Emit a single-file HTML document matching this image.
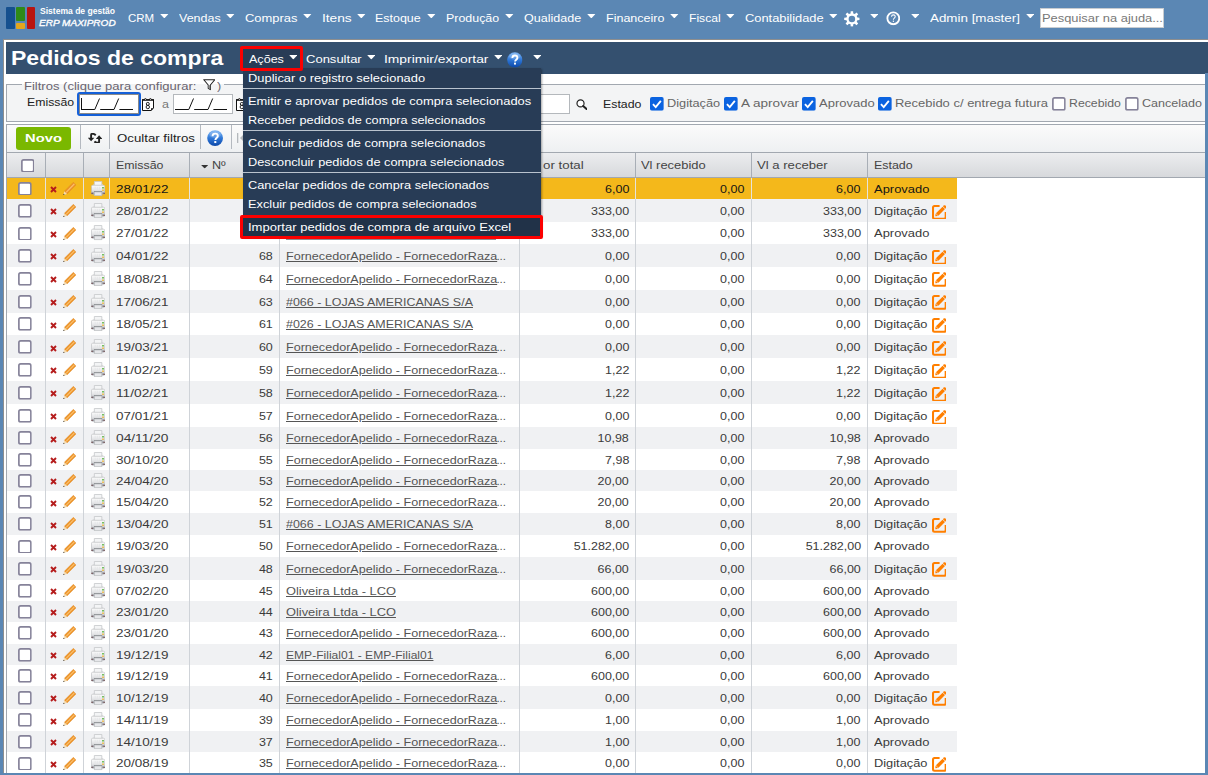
<!DOCTYPE html>
<html><head><meta charset="utf-8"><title>Pedidos de compra</title><style>
html,body{margin:0;padding:0}
body{width:1208px;height:775px;overflow:hidden;position:relative;background:#5b87b4;font-family:"Liberation Sans", sans-serif;}
.b{position:absolute;display:block;box-sizing:border-box}
.t{position:absolute;display:inline-block;white-space:nowrap;line-height:1;transform-origin:0 50%;font-family:"Liberation Sans", sans-serif;}
</style></head><body>

<svg width="0" height="0" style="position:absolute">
<defs>
<linearGradient id="gq" x1="0" y1="0" x2="0" y2="1"><stop offset="0" stop-color="#7db6f5"/><stop offset="0.5" stop-color="#2f78d8"/><stop offset="1" stop-color="#0c48a8"/></linearGradient>
<linearGradient id="gp" x1="0" y1="0" x2="0" y2="1"><stop offset="0" stop-color="#fcfcfc"/><stop offset=".55" stop-color="#e4e5e7"/><stop offset="1" stop-color="#b8babd"/></linearGradient>
<symbol id="arw" viewBox="0 0 9 5"><path d="M0 0H9L4.5 4.8Z" fill="#fff"/></symbol>
<symbol id="gear" viewBox="0 0 16 16"><path fill-rule="evenodd" fill="#fff" d="M6.67 2.46 L6.76 0.20 L9.24 0.20 L9.33 2.46 L10.98 3.14 L12.64 1.61 L14.39 3.36 L12.86 5.02 L13.54 6.67 L15.80 6.76 L15.80 9.24 L13.54 9.33 L12.86 10.98 L14.39 12.64 L12.64 14.39 L10.98 12.86 L9.33 13.54 L9.24 15.80 L6.76 15.80 L6.67 13.54 L5.02 12.86 L3.36 14.39 L1.61 12.64 L3.14 10.98 L2.46 9.33 L0.20 9.24 L0.20 6.76 L2.46 6.67 L3.14 5.02 L1.61 3.36 L3.36 1.61 L5.02 3.14Z M4.70 8.00 a3.3 3.3 0 1 0 6.6 0 a3.3 3.3 0 1 0 -6.6 0Z"/></symbol>
<symbol id="qc" viewBox="0 0 15 15"><circle cx="7.5" cy="7.5" r="6.1" fill="none" stroke="#fff" stroke-width="1.9"/><path d="M5.7 5.9c0-1.2.8-1.9 1.9-1.9s1.9.7 1.9 1.7c0 1.6-1.9 1.5-1.9 3.2" fill="none" stroke="#fff" stroke-width="1.1"/><rect x="7" y="9.9" width="1.2" height="1.3" fill="#fff"/></symbol>
<symbol id="qb" viewBox="0 0 16 16"><circle cx="8" cy="8" r="7.8" fill="url(#gq)"/><ellipse cx="8" cy="4.6" rx="5.6" ry="3.4" fill="#fff" opacity=".18"/><path d="M5.5 6.1c0-1.6 1.1-2.5 2.6-2.5s2.6.9 2.6 2.3c0 2-2.4 2-2.4 3.9" fill="none" stroke="#fff" stroke-width="1.9"/><rect x="7.2" y="10.9" width="2" height="2" fill="#fff"/></symbol>
<symbol id="fun" viewBox="0 0 13 12"><path d="M.8.8H12.2L7.6 6.2V11L5.4 9.6V6.2Z" fill="#fff" stroke="#222" stroke-width="1.1" stroke-linejoin="round"/><path d="M5.6 6.4H7.4V10.6L5.6 9.5Z" fill="#888"/></symbol>
<symbol id="cal" viewBox="0 0 12 13"><path d="M.5 1.800H11.500V10.200L9 12.500H.5Z" fill="#fff" stroke="#111" stroke-width="1"/><rect x="0" y="1.200" width="12" height="1.500" fill="#111"/><rect x="2.600" y=".2" width="1.600" height="1.400" fill="#111"/><rect x="7.600" y=".2" width="1.600" height="1.400" fill="#111"/><circle cx="3.400" cy="1.300" r=".55" fill="#fff"/><circle cx="8.400" cy="1.300" r=".55" fill="#fff"/><path d="M9 12.500V10.200H11.500Z" fill="#111"/><circle cx="5.800" cy="5.900" r="1.500" fill="none" stroke="#111" stroke-width=".9"/><circle cx="5.800" cy="9" r="1.700" fill="none" stroke="#111" stroke-width=".9"/></symbol>
<symbol id="mag" viewBox="0 0 12 11"><circle cx="4.600" cy="4.400" r="3.600" fill="#fff" stroke="#222" stroke-width="1.200"/><path d="M7.300 7L11 10.300" stroke="#222" stroke-width="2" stroke-linecap="round"/></symbol>
<symbol id="xx" viewBox="0 0 7 7"><path d="M1 1L6 6M6 1L1 6" stroke="#b51c1c" stroke-width="1.900" stroke-linecap="butt"/></symbol>
<symbol id="pen" viewBox="0 0 14 14"><path d="M10.900.3L13.700 3.100 4.200 12.600 1.400 9.800Z" fill="#ee9428" stroke="#d98424" stroke-width=".4"/><path d="M11.600 1.700L12.400 2.500 3.700 11.200 2.900 10.400Z" fill="#f9c274"/><path d="M1.400 9.800L4.200 12.600.4 13.700Z" fill="#f6dcae"/><path d="M.3 13.800L1.700 13.400.7 12.400Z" fill="#222"/></symbol>
<symbol id="prn" viewBox="0 0 14 15"><path d="M3.300.5H10.700V4.600H3.300Z" fill="#f4f5f6" stroke="#c6c8cb" stroke-width=".8"/><path d="M2.300 3.400L3.300 2.600V4.400H2.300ZM11.700 3.400L10.700 2.600V4.400H11.700Z" fill="#d4d6d8"/><rect x=".5" y="4.200" width="13" height="8.600" rx="1" fill="url(#gp)" stroke="#b9bbbe" stroke-width=".6"/><path d="M4.200 5.800V9.400M6.300 5.800V9.400M8.400 5.800V9.400" stroke="#e3e4e6" stroke-width=".7"/><rect x=".5" y="11.300" width="13" height="1.900" rx=".7" fill="#9698a2"/><rect x=".5" y="11.600" width="1.100" height="1.200" fill="#6e4242"/><rect x="12.400" y="11.600" width="1.100" height="1.200" fill="#6e4242"/><rect x="3" y="9.900" width="8" height=".9" fill="#777a7e"/><path d="M3.300 10.800H10.700V14.600H3.300Z" fill="#e6e7ea" stroke="#b6b8bb" stroke-width=".8"/><rect x="10.900" y="5.900" width="1.900" height="1.600" rx=".5" fill="#62b84a"/><rect x="10.900" y="8.300" width="1.900" height="1.400" rx=".5" fill="#f0b020"/></symbol>
<symbol id="edt" viewBox="0 0 15.2 15.3"><path d="M7.8 1.05H2.6Q1.05 1.05 1.05 2.600V12.650Q1.05 14.200 2.600 14.200H12.500Q14.050 14.200 14.050 12.650V7.100" fill="none" stroke="#ff7f00" stroke-width="2.1"/><path d="M3.40 11.60L3.72 8.81L6.19 11.28Z" fill="#ff7f00"/><path d="M4.07 8.45L10.86 1.67L13.33 4.14L6.55 10.93Z" fill="#ff7f00"/><path d="M11.21 1.31L12.20 0.32Q13.61 0.03 14.22 0.78Q14.97 1.39 14.68 2.80L13.69 3.79Z" fill="#ff7f00"/></symbol>
<symbol id="ref" viewBox="0 0 14.2 10.6"><path d="M7.700 2.300Q6.600.900 5 .900H4.100Q3.100.900 3.100 1.900V5.600" fill="none" stroke="#222" stroke-width="1.900"/><path d="M-.2 4.700H6.400L3.100 8.300Z" fill="#222"/><path d="M6.500 8.300Q7.600 9.700 9.200 9.700H10.100Q11.100 9.700 11.100 8.700V5" fill="none" stroke="#222" stroke-width="1.900"/><path d="M7.800 5.900H14.400L11.100 2.300Z" fill="#222"/></symbol>
<symbol id="pf" viewBox="0 0 8 10"><rect x="0" y="0" width="1.300" height="10" fill="#b4b8bc"/><path d="M8 0V10L3 5Z" fill="#b4b8bc"/></symbol>
<symbol id="srt" viewBox="0 0 8 4"><path d="M0 0H8L4 4Z" fill="#333"/></symbol>
<symbol id="chk" viewBox="0 0 14 14"><rect x="0" y="0" width="14" height="14" rx="2" fill="#0b63e0"/><path d="M3 7.300L5.800 10.200 11 4" fill="none" stroke="#fff" stroke-width="1.900"/></symbol>
<symbol id="unc" viewBox="0 0 14 14"><rect x=".9" y=".9" width="12.200" height="12.200" rx="1.800" fill="#fff" stroke="#858299" stroke-width="1.700"/></symbol>
</defs></svg>

<div class="b" style="left:6px;top:7px;width:8.5px;height:22px;background:#15508f;border-radius:1px"></div>
<div class="b" style="left:16.3px;top:7px;width:8.5px;height:13.7px;background:#2f8a17;border-radius:1px"></div>
<div class="b" style="left:16.3px;top:22.7px;width:8.5px;height:6px;background:#e3a61c;border-radius:1px"></div>
<div class="b" style="left:26.6px;top:7px;width:8.5px;height:22px;background:#b81410;border-radius:1px"></div>
<span class="t" style="left:40.00px;top:7px;font-size:9px;color:#fff;font-weight:bold;font-style:normal;transform:scaleX(0.9490);">Sistema de gestão</span>
<span class="t" style="left:39.30px;top:18px;font-size:9.5px;color:#fff;font-weight:normal;font-style:italic;transform:scaleX(1.0579);-webkit-text-stroke:0.35px #fff;">ERP MAXIPROD</span>
<span class="t" style="left:128.15px;top:13px;font-size:11.5px;color:#fff;font-weight:normal;font-style:normal;transform:scaleX(0.9999);">CRM</span>
<svg class="b" style="left:160.00px;top:13.70px;" width="8.6" height="4.6"><use href="#arw"/></svg>
<span class="t" style="left:178.90px;top:13px;font-size:11.5px;color:#fff;font-weight:normal;font-style:normal;transform:scaleX(1.0866);">Vendas</span>
<svg class="b" style="left:226.00px;top:13.70px;" width="8.6" height="4.6"><use href="#arw"/></svg>
<span class="t" style="left:245.15px;top:13px;font-size:11.5px;color:#fff;font-weight:normal;font-style:normal;transform:scaleX(1.1242);">Compras</span>
<svg class="b" style="left:303.00px;top:13.70px;" width="8.6" height="4.6"><use href="#arw"/></svg>
<span class="t" style="left:321.90px;top:13px;font-size:11.5px;color:#fff;font-weight:normal;font-style:normal;transform:scaleX(1.1910);">Itens</span>
<svg class="b" style="left:357.00px;top:13.70px;" width="8.6" height="4.6"><use href="#arw"/></svg>
<span class="t" style="left:375.40px;top:13px;font-size:11.5px;color:#fff;font-weight:normal;font-style:normal;transform:scaleX(1.0829);">Estoque</span>
<svg class="b" style="left:427.00px;top:13.70px;" width="8.6" height="4.6"><use href="#arw"/></svg>
<span class="t" style="left:446.15px;top:13px;font-size:11.5px;color:#fff;font-weight:normal;font-style:normal;transform:scaleX(1.0805);">Produção</span>
<svg class="b" style="left:505.00px;top:13.70px;" width="8.6" height="4.6"><use href="#arw"/></svg>
<span class="t" style="left:523.90px;top:13px;font-size:11.5px;color:#fff;font-weight:normal;font-style:normal;transform:scaleX(1.0908);">Qualidade</span>
<svg class="b" style="left:587.00px;top:13.70px;" width="8.6" height="4.6"><use href="#arw"/></svg>
<span class="t" style="left:605.90px;top:13px;font-size:11.5px;color:#fff;font-weight:normal;font-style:normal;transform:scaleX(1.0884);">Financeiro</span>
<svg class="b" style="left:670.00px;top:13.70px;" width="8.6" height="4.6"><use href="#arw"/></svg>
<span class="t" style="left:688.90px;top:13px;font-size:11.5px;color:#fff;font-weight:normal;font-style:normal;transform:scaleX(1.0556);">Fiscal</span>
<svg class="b" style="left:726.00px;top:13.70px;" width="8.6" height="4.6"><use href="#arw"/></svg>
<span class="t" style="left:744.90px;top:13px;font-size:11.5px;color:#fff;font-weight:normal;font-style:normal;transform:scaleX(1.1188);">Contabilidade</span>
<svg class="b" style="left:829.00px;top:13.70px;" width="8.6" height="4.6"><use href="#arw"/></svg>
<span class="t" style="left:929.90px;top:13px;font-size:11.5px;color:#fff;font-weight:normal;font-style:normal;transform:scaleX(1.1632);">Admin [master]</span>
<svg class="b" style="left:1025.50px;top:13.70px;" width="8.6" height="4.6"><use href="#arw"/></svg>
<svg class="b" style="left:844.00px;top:11.10px;" width="15.8" height="15.8"><use href="#gear"/></svg>
<svg class="b" style="left:869.75px;top:13.70px;" width="8.6" height="4.6"><use href="#arw"/></svg>
<svg class="b" style="left:885.70px;top:11.40px;" width="14.6" height="14.6"><use href="#qc"/></svg>
<svg class="b" style="left:910.70px;top:13.70px;" width="8.6" height="4.6"><use href="#arw"/></svg>
<div class="b" style="left:1040px;top:8px;width:124px;height:19.5px;background:#fff;border:1px solid #c8ccd0"></div>
<span class="t" style="left:1041.65px;top:13px;font-size:11.5px;color:#777;font-weight:normal;font-style:normal;transform:scaleX(1.1194);">Pesquisar na ajuda...</span>
<div class="b" style="left:3px;top:39px;width:1202px;height:734px;background:#fff"></div>
<div class="b" style="left:3px;top:39px;width:1205px;height:1px;background:#8e8e8e"></div>
<div class="b" style="left:3px;top:40px;width:1px;height:733px;background:#8e8e8e"></div>
<div class="b" style="left:4px;top:40px;width:1204px;height:2px;background:#fff"></div>
<div class="b" style="left:6px;top:42px;width:1202px;height:32px;background:#34506f"></div>
<span class="t" style="left:11.20px;top:47px;font-size:21px;color:#fff;font-weight:bold;font-style:normal;transform:scaleX(1.0959);">Pedidos de compra</span>
<div class="b" style="left:6px;top:84px;width:1210px;height:38px;background:#f3f4f5;border:1px solid #a2a8b0"></div>
<div class="b" style="left:21.5px;top:80px;width:202px;height:4px;background:#fff"></div>
<div class="b" style="left:21.5px;top:84px;width:202px;height:1px;background:#f3f4f5"></div>
<span class="t" style="left:23.80px;top:81px;font-size:11.5px;color:#6a6470;font-weight:normal;font-style:normal;transform:scaleX(1.1333);">Filtros (clique para configurar:</span>
<svg class="b" style="left:202.60px;top:79.00px;" width="12.6" height="11.6"><use href="#fun"/></svg>
<span class="t" style="left:217.10px;top:81px;font-size:11.5px;color:#6a6470;font-weight:normal;font-style:normal;transform:scaleX(1.1000);">)</span>
<span class="t" style="left:26.65px;top:97px;font-size:11.5px;color:#222;font-weight:normal;font-style:normal;transform:scaleX(1.0667);">Emissão</span>
<div class="b" style="left:77px;top:92px;width:63.5px;height:24px;background:#fff;border:2px solid #1560d8;border-radius:3px"></div>
<div class="b" style="left:79px;top:94px;width:59.5px;height:20px;border:1px solid #8a8a8a;background:#fff"></div>
<svg class="b" style="left:80.6px;top:98px" width="53" height="13"><path d="M0 11.5H13.8L18.5 .5M19.2 11.5H33L37.700 .5M38.400 11.5H52" fill="none" stroke="#111" stroke-width="1"/></svg>
<div class="b" style="left:80.5px;top:97.5px;width:1px;height:12.5px;background:#111"></div>
<svg class="b" style="left:142.10px;top:98.00px;" width="12" height="13"><use href="#cal"/></svg>
<span class="t" style="left:161.65px;top:99px;font-size:11.5px;color:#777;font-weight:normal;font-style:normal;transform:scaleX(1.0849);">a</span>
<div class="b" style="left:173px;top:94px;width:59.5px;height:19.5px;border:1px solid #b4b8bc;background:#fff"></div>
<svg class="b" style="left:175px;top:98px" width="53" height="13"><path d="M0 11.5H13.8L18.5 .5M19.2 11.5H33L37.700 .5M38.400 11.5H52" fill="none" stroke="#111" stroke-width="1"/></svg>
<svg class="b" style="left:235.80px;top:98.00px;" width="12" height="13"><use href="#cal"/></svg>
<div class="b" style="left:255px;top:94px;width:314.7px;height:19.5px;border:1px solid #b4b8bc;background:#fff"></div>
<svg class="b" style="left:575.60px;top:99.00px;" width="11.8" height="11"><use href="#mag"/></svg>
<span class="t" style="left:602.80px;top:99px;font-size:11.5px;color:#222;font-weight:normal;font-style:normal;transform:scaleX(1.0723);">Estado</span>
<svg class="b" style="left:650.00px;top:97.20px;" width="13.8" height="13.8"><use href="#chk"/></svg>
<span class="t" style="left:666.90px;top:98px;font-size:11.5px;color:#666;font-weight:normal;font-style:normal;transform:scaleX(1.1094);">Digitação</span>
<svg class="b" style="left:724.25px;top:97.20px;" width="13.8" height="13.8"><use href="#chk"/></svg>
<span class="t" style="left:740.65px;top:98px;font-size:11.5px;color:#666;font-weight:normal;font-style:normal;transform:scaleX(1.1770);">A aprovar</span>
<svg class="b" style="left:802.00px;top:97.20px;" width="13.8" height="13.8"><use href="#chk"/></svg>
<span class="t" style="left:818.65px;top:98px;font-size:11.5px;color:#666;font-weight:normal;font-style:normal;transform:scaleX(1.1313);">Aprovado</span>
<svg class="b" style="left:878.25px;top:97.20px;" width="13.8" height="13.8"><use href="#chk"/></svg>
<span class="t" style="left:894.90px;top:98px;font-size:11.5px;color:#666;font-weight:normal;font-style:normal;transform:scaleX(1.1285);">Recebido c/ entrega futura</span>
<svg class="b" style="left:1052.25px;top:97.20px;" width="13.8" height="13.8"><use href="#unc"/></svg>
<span class="t" style="left:1069.15px;top:98px;font-size:11.5px;color:#666;font-weight:normal;font-style:normal;transform:scaleX(1.0691);">Recebido</span>
<svg class="b" style="left:1125.25px;top:97.20px;" width="13.8" height="13.8"><use href="#unc"/></svg>
<span class="t" style="left:1142.15px;top:98px;font-size:11.5px;color:#666;font-weight:normal;font-style:normal;transform:scaleX(1.0903);">Cancelado</span>
<div class="b" style="left:6px;top:124px;width:1199px;height:28px;background:linear-gradient(#fbfbfb,#eef0f2);border-top:1px solid #a2a8b0;border-left:1px solid #a2a8b0"></div>
<div class="b" style="left:16px;top:127px;width:55px;height:23px;background:#7ab800;border-radius:3px"></div>
<span class="t" style="left:25.10px;top:133px;font-size:11.5px;color:#fff;font-weight:bold;font-style:normal;transform:scaleX(1.2835);">Novo</span>
<div class="b" style="left:80px;top:125px;width:1px;height:24px;background:#b4b9c0"></div>
<div class="b" style="left:109px;top:125px;width:1px;height:24px;background:#b4b9c0"></div>
<div class="b" style="left:200px;top:125px;width:1px;height:24px;background:#b4b9c0"></div>
<div class="b" style="left:230.5px;top:125px;width:1px;height:24px;background:#b4b9c0"></div>
<svg class="b" style="left:87.90px;top:132.80px;" width="14.2" height="10.6"><use href="#ref"/></svg>
<span class="t" style="left:116.80px;top:133px;font-size:11.5px;color:#222;font-weight:normal;font-style:normal;transform:scaleX(1.1513);">Ocultar filtros</span>
<svg class="b" style="left:206.90px;top:130.10px;" width="16.2" height="16.2"><use href="#qb"/></svg>
<svg class="b" style="left:237.00px;top:133.00px;" width="8" height="10"><use href="#pf"/></svg>
<div class="b" style="left:6px;top:152px;width:1199px;height:26px;background:linear-gradient(#ecedef,#d7d9dc);border-top:1px solid #a2a8b0;border-bottom:1px solid #a2a8b0;border-left:1px solid #a2a8b0;box-sizing:border-box"></div>
<div class="b" style="left:45px;top:153px;width:1px;height:24px;background:#a8aeb6"></div>
<div class="b" style="left:83px;top:153px;width:1px;height:24px;background:#a8aeb6"></div>
<div class="b" style="left:109px;top:153px;width:1px;height:24px;background:#a8aeb6"></div>
<div class="b" style="left:189px;top:153px;width:1px;height:24px;background:#a8aeb6"></div>
<div class="b" style="left:279px;top:153px;width:1px;height:24px;background:#a8aeb6"></div>
<div class="b" style="left:519px;top:153px;width:1px;height:24px;background:#a8aeb6"></div>
<div class="b" style="left:635px;top:153px;width:1px;height:24px;background:#a8aeb6"></div>
<div class="b" style="left:751px;top:153px;width:1px;height:24px;background:#a8aeb6"></div>
<div class="b" style="left:867px;top:153px;width:1px;height:24px;background:#a8aeb6"></div>
<svg class="b" style="left:20.70px;top:158.60px;" width="13.6" height="13.6"><use href="#unc"/></svg>
<span class="t" style="left:115.65px;top:160px;font-size:11.5px;color:#444;font-weight:normal;font-style:normal;transform:scaleX(1.0757);">Emissão</span>
<svg class="b" style="left:200.75px;top:165.20px;" width="7.4" height="3.6"><use href="#srt"/></svg>
<span class="t" style="left:211.90px;top:160px;font-size:11.5px;color:#444;font-weight:normal;font-style:normal;transform:scaleX(1.0946);">Nº</span>
<span class="t" style="left:285.65px;top:160px;font-size:11.5px;color:#444;font-weight:normal;font-style:normal;transform:scaleX(1.0193);">Fornecedor</span>
<span class="t" style="left:543.15px;top:160px;font-size:11.5px;color:#444;font-weight:normal;font-style:normal;transform:scaleX(1.1572);">or total</span>
<span class="t" style="left:525.40px;top:160px;font-size:11.5px;color:#444;font-weight:normal;font-style:normal;transform:scaleX(0.9949);">Val</span>
<span class="t" style="left:641.40px;top:160px;font-size:11.5px;color:#444;font-weight:normal;font-style:normal;transform:scaleX(1.1243);">Vl recebido</span>
<span class="t" style="left:757.40px;top:160px;font-size:11.5px;color:#444;font-weight:normal;font-style:normal;transform:scaleX(1.1400);">Vl a receber</span>
<span class="t" style="left:873.90px;top:160px;font-size:11.5px;color:#444;font-weight:normal;font-style:normal;transform:scaleX(1.0806);">Estado</span>
<div class="b" style="left:7px;top:178px;width:950px;height:21px;background:#f4b81b"></div>
<svg class="b" style="left:18.00px;top:181.70px;" width="13.8" height="13.8"><use href="#unc"/></svg>
<svg class="b" style="left:49.70px;top:186.15px;" width="7" height="7"><use href="#xx"/></svg>
<svg class="b" style="left:62.90px;top:181.75px;" width="13.3" height="13.3"><use href="#pen"/></svg>
<svg class="b" style="left:90.80px;top:180.55px;" width="14.2" height="15.2"><use href="#prn"/></svg>
<span class="t" style="left:115.65px;top:184px;font-size:11.5px;color:#151515;font-weight:normal;font-style:normal;transform:scaleX(1.1717);">28/01/22</span>
<span class="t" style="right:934.90px;top:184px;font-size:11.5px;color:#151515;font-weight:normal;font-style:normal;transform-origin:100% 50%;transform:scaleX(1.0850);">70</span>
<span class="t" style="left:285.65px;top:184px;font-size:11.5px;color:#222;font-weight:normal;font-style:normal;transform:scaleX(1.0940);text-decoration:underline;">FornecedorApelido - FornecedorRaza</span>
<span class="t" style="left:496.40px;top:184px;font-size:11.5px;color:#222;font-weight:normal;font-style:normal;transform:scaleX(1.0000);">...</span>
<span class="t" style="right:578.90px;top:184px;font-size:11.5px;color:#151515;font-weight:normal;font-style:normal;transform-origin:100% 50%;transform:scaleX(1.0850);">6,00</span>
<span class="t" style="right:463.60px;top:184px;font-size:11.5px;color:#151515;font-weight:normal;font-style:normal;transform-origin:100% 50%;transform:scaleX(1.0850);">0,00</span>
<span class="t" style="right:347.20px;top:184px;font-size:11.5px;color:#151515;font-weight:normal;font-style:normal;transform-origin:100% 50%;transform:scaleX(1.0850);">6,00</span>
<span class="t" style="left:873.60px;top:184px;font-size:11.5px;color:#151515;font-weight:normal;font-style:normal;transform:scaleX(1.1252);">Aprovado</span>
<div class="b" style="left:7px;top:199px;width:950px;height:23px;background:#f0f1f3"></div>
<svg class="b" style="left:18.00px;top:203.95px;" width="13.8" height="13.8"><use href="#unc"/></svg>
<svg class="b" style="left:49.70px;top:208.40px;" width="7" height="7"><use href="#xx"/></svg>
<svg class="b" style="left:62.90px;top:204.00px;" width="13.3" height="13.3"><use href="#pen"/></svg>
<svg class="b" style="left:90.80px;top:202.80px;" width="14.2" height="15.2"><use href="#prn"/></svg>
<span class="t" style="left:115.65px;top:206px;font-size:11.5px;color:#3a3a3a;font-weight:normal;font-style:normal;transform:scaleX(1.1717);">28/01/22</span>
<span class="t" style="right:934.90px;top:206px;font-size:11.5px;color:#3a3a3a;font-weight:normal;font-style:normal;transform-origin:100% 50%;transform:scaleX(1.0850);">69</span>
<span class="t" style="left:285.65px;top:206px;font-size:11.5px;color:#555;font-weight:normal;font-style:normal;transform:scaleX(1.0940);text-decoration:underline;">FornecedorApelido - FornecedorRaza</span>
<span class="t" style="left:496.40px;top:206px;font-size:11.5px;color:#555;font-weight:normal;font-style:normal;transform:scaleX(1.0000);">...</span>
<span class="t" style="right:578.90px;top:206px;font-size:11.5px;color:#3a3a3a;font-weight:normal;font-style:normal;transform-origin:100% 50%;transform:scaleX(1.0850);">333,00</span>
<span class="t" style="right:463.60px;top:206px;font-size:11.5px;color:#3a3a3a;font-weight:normal;font-style:normal;transform-origin:100% 50%;transform:scaleX(1.0850);">0,00</span>
<span class="t" style="right:347.20px;top:206px;font-size:11.5px;color:#3a3a3a;font-weight:normal;font-style:normal;transform-origin:100% 50%;transform:scaleX(1.0850);">333,00</span>
<span class="t" style="left:873.60px;top:206px;font-size:11.5px;color:#3a3a3a;font-weight:normal;font-style:normal;transform:scaleX(1.1157);">Digitação</span>
<svg class="b" style="left:931.60px;top:204.55px;" width="14.8" height="14.9"><use href="#edt"/></svg>
<div class="b" style="left:7px;top:222px;width:950px;height:22px;background:#fff"></div>
<svg class="b" style="left:18.00px;top:226.55px;" width="13.8" height="13.8"><use href="#unc"/></svg>
<svg class="b" style="left:49.70px;top:231.00px;" width="7" height="7"><use href="#xx"/></svg>
<svg class="b" style="left:62.90px;top:226.60px;" width="13.3" height="13.3"><use href="#pen"/></svg>
<svg class="b" style="left:90.80px;top:225.40px;" width="14.2" height="15.2"><use href="#prn"/></svg>
<span class="t" style="left:115.65px;top:228px;font-size:11.5px;color:#3a3a3a;font-weight:normal;font-style:normal;transform:scaleX(1.1717);">27/01/22</span>
<span class="t" style="right:934.90px;top:228px;font-size:11.5px;color:#3a3a3a;font-weight:normal;font-style:normal;transform-origin:100% 50%;transform:scaleX(1.0850);">69</span>
<span class="t" style="left:285.65px;top:228px;font-size:11.5px;color:#555;font-weight:normal;font-style:normal;transform:scaleX(1.0940);text-decoration:underline;">FornecedorApelido - FornecedorRaza</span>
<span class="t" style="left:496.40px;top:228px;font-size:11.5px;color:#555;font-weight:normal;font-style:normal;transform:scaleX(1.0000);">...</span>
<span class="t" style="right:578.90px;top:228px;font-size:11.5px;color:#3a3a3a;font-weight:normal;font-style:normal;transform-origin:100% 50%;transform:scaleX(1.0850);">333,00</span>
<span class="t" style="right:463.60px;top:228px;font-size:11.5px;color:#3a3a3a;font-weight:normal;font-style:normal;transform-origin:100% 50%;transform:scaleX(1.0850);">0,00</span>
<span class="t" style="right:347.20px;top:228px;font-size:11.5px;color:#3a3a3a;font-weight:normal;font-style:normal;transform-origin:100% 50%;transform:scaleX(1.0850);">333,00</span>
<span class="t" style="left:873.60px;top:228px;font-size:11.5px;color:#3a3a3a;font-weight:normal;font-style:normal;transform:scaleX(1.1252);">Aprovado</span>
<div class="b" style="left:7px;top:244px;width:950px;height:23px;background:#f0f1f3"></div>
<svg class="b" style="left:18.00px;top:248.95px;" width="13.8" height="13.8"><use href="#unc"/></svg>
<svg class="b" style="left:49.70px;top:253.40px;" width="7" height="7"><use href="#xx"/></svg>
<svg class="b" style="left:62.90px;top:249.00px;" width="13.3" height="13.3"><use href="#pen"/></svg>
<svg class="b" style="left:90.80px;top:247.80px;" width="14.2" height="15.2"><use href="#prn"/></svg>
<span class="t" style="left:115.65px;top:251px;font-size:11.5px;color:#3a3a3a;font-weight:normal;font-style:normal;transform:scaleX(1.1717);">04/01/22</span>
<span class="t" style="right:934.90px;top:251px;font-size:11.5px;color:#3a3a3a;font-weight:normal;font-style:normal;transform-origin:100% 50%;transform:scaleX(1.0850);">68</span>
<span class="t" style="left:285.65px;top:251px;font-size:11.5px;color:#555;font-weight:normal;font-style:normal;transform:scaleX(1.0940);text-decoration:underline;">FornecedorApelido - FornecedorRaza</span>
<span class="t" style="left:496.40px;top:251px;font-size:11.5px;color:#555;font-weight:normal;font-style:normal;transform:scaleX(1.0000);">...</span>
<span class="t" style="right:578.90px;top:251px;font-size:11.5px;color:#3a3a3a;font-weight:normal;font-style:normal;transform-origin:100% 50%;transform:scaleX(1.0850);">0,00</span>
<span class="t" style="right:463.60px;top:251px;font-size:11.5px;color:#3a3a3a;font-weight:normal;font-style:normal;transform-origin:100% 50%;transform:scaleX(1.0850);">0,00</span>
<span class="t" style="right:347.20px;top:251px;font-size:11.5px;color:#3a3a3a;font-weight:normal;font-style:normal;transform-origin:100% 50%;transform:scaleX(1.0850);">0,00</span>
<span class="t" style="left:873.60px;top:251px;font-size:11.5px;color:#3a3a3a;font-weight:normal;font-style:normal;transform:scaleX(1.1157);">Digitação</span>
<svg class="b" style="left:931.60px;top:249.55px;" width="14.8" height="14.9"><use href="#edt"/></svg>
<div class="b" style="left:7px;top:267px;width:950px;height:23px;background:#fff"></div>
<svg class="b" style="left:18.00px;top:271.80px;" width="13.8" height="13.8"><use href="#unc"/></svg>
<svg class="b" style="left:49.70px;top:276.25px;" width="7" height="7"><use href="#xx"/></svg>
<svg class="b" style="left:62.90px;top:271.85px;" width="13.3" height="13.3"><use href="#pen"/></svg>
<svg class="b" style="left:90.80px;top:270.65px;" width="14.2" height="15.2"><use href="#prn"/></svg>
<span class="t" style="left:115.65px;top:274px;font-size:11.5px;color:#3a3a3a;font-weight:normal;font-style:normal;transform:scaleX(1.1717);">18/08/21</span>
<span class="t" style="right:934.90px;top:274px;font-size:11.5px;color:#3a3a3a;font-weight:normal;font-style:normal;transform-origin:100% 50%;transform:scaleX(1.0850);">64</span>
<span class="t" style="left:285.65px;top:274px;font-size:11.5px;color:#555;font-weight:normal;font-style:normal;transform:scaleX(1.0940);text-decoration:underline;">FornecedorApelido - FornecedorRaza</span>
<span class="t" style="left:496.40px;top:274px;font-size:11.5px;color:#555;font-weight:normal;font-style:normal;transform:scaleX(1.0000);">...</span>
<span class="t" style="right:578.90px;top:274px;font-size:11.5px;color:#3a3a3a;font-weight:normal;font-style:normal;transform-origin:100% 50%;transform:scaleX(1.0850);">0,00</span>
<span class="t" style="right:463.60px;top:274px;font-size:11.5px;color:#3a3a3a;font-weight:normal;font-style:normal;transform-origin:100% 50%;transform:scaleX(1.0850);">0,00</span>
<span class="t" style="right:347.20px;top:274px;font-size:11.5px;color:#3a3a3a;font-weight:normal;font-style:normal;transform-origin:100% 50%;transform:scaleX(1.0850);">0,00</span>
<span class="t" style="left:873.60px;top:274px;font-size:11.5px;color:#3a3a3a;font-weight:normal;font-style:normal;transform:scaleX(1.1157);">Digitação</span>
<svg class="b" style="left:931.60px;top:272.40px;" width="14.8" height="14.9"><use href="#edt"/></svg>
<div class="b" style="left:7px;top:290px;width:950px;height:23px;background:#f0f1f3"></div>
<svg class="b" style="left:18.00px;top:294.85px;" width="13.8" height="13.8"><use href="#unc"/></svg>
<svg class="b" style="left:49.70px;top:299.30px;" width="7" height="7"><use href="#xx"/></svg>
<svg class="b" style="left:62.90px;top:294.90px;" width="13.3" height="13.3"><use href="#pen"/></svg>
<svg class="b" style="left:90.80px;top:293.70px;" width="14.2" height="15.2"><use href="#prn"/></svg>
<span class="t" style="left:115.65px;top:297px;font-size:11.5px;color:#3a3a3a;font-weight:normal;font-style:normal;transform:scaleX(1.1717);">17/06/21</span>
<span class="t" style="right:934.90px;top:297px;font-size:11.5px;color:#3a3a3a;font-weight:normal;font-style:normal;transform-origin:100% 50%;transform:scaleX(1.0850);">63</span>
<span class="t" style="left:285.65px;top:297px;font-size:11.5px;color:#555;font-weight:normal;font-style:normal;transform:scaleX(1.0833);text-decoration:underline;">#066 - LOJAS AMERICANAS S/A</span>
<span class="t" style="right:578.90px;top:297px;font-size:11.5px;color:#3a3a3a;font-weight:normal;font-style:normal;transform-origin:100% 50%;transform:scaleX(1.0850);">0,00</span>
<span class="t" style="right:463.60px;top:297px;font-size:11.5px;color:#3a3a3a;font-weight:normal;font-style:normal;transform-origin:100% 50%;transform:scaleX(1.0850);">0,00</span>
<span class="t" style="right:347.20px;top:297px;font-size:11.5px;color:#3a3a3a;font-weight:normal;font-style:normal;transform-origin:100% 50%;transform:scaleX(1.0850);">0,00</span>
<span class="t" style="left:873.60px;top:297px;font-size:11.5px;color:#3a3a3a;font-weight:normal;font-style:normal;transform:scaleX(1.1157);">Digitação</span>
<svg class="b" style="left:931.60px;top:295.45px;" width="14.8" height="14.9"><use href="#edt"/></svg>
<div class="b" style="left:7px;top:313px;width:950px;height:22px;background:#fff"></div>
<svg class="b" style="left:18.00px;top:317.45px;" width="13.8" height="13.8"><use href="#unc"/></svg>
<svg class="b" style="left:49.70px;top:321.90px;" width="7" height="7"><use href="#xx"/></svg>
<svg class="b" style="left:62.90px;top:317.50px;" width="13.3" height="13.3"><use href="#pen"/></svg>
<svg class="b" style="left:90.80px;top:316.30px;" width="14.2" height="15.2"><use href="#prn"/></svg>
<span class="t" style="left:115.65px;top:319px;font-size:11.5px;color:#3a3a3a;font-weight:normal;font-style:normal;transform:scaleX(1.1717);">18/05/21</span>
<span class="t" style="right:934.90px;top:319px;font-size:11.5px;color:#3a3a3a;font-weight:normal;font-style:normal;transform-origin:100% 50%;transform:scaleX(1.0850);">61</span>
<span class="t" style="left:285.65px;top:319px;font-size:11.5px;color:#555;font-weight:normal;font-style:normal;transform:scaleX(1.0833);text-decoration:underline;">#026 - LOJAS AMERICANAS S/A</span>
<span class="t" style="right:578.90px;top:319px;font-size:11.5px;color:#3a3a3a;font-weight:normal;font-style:normal;transform-origin:100% 50%;transform:scaleX(1.0850);">0,00</span>
<span class="t" style="right:463.60px;top:319px;font-size:11.5px;color:#3a3a3a;font-weight:normal;font-style:normal;transform-origin:100% 50%;transform:scaleX(1.0850);">0,00</span>
<span class="t" style="right:347.20px;top:319px;font-size:11.5px;color:#3a3a3a;font-weight:normal;font-style:normal;transform-origin:100% 50%;transform:scaleX(1.0850);">0,00</span>
<span class="t" style="left:873.60px;top:319px;font-size:11.5px;color:#3a3a3a;font-weight:normal;font-style:normal;transform:scaleX(1.1157);">Digitação</span>
<svg class="b" style="left:931.60px;top:318.05px;" width="14.8" height="14.9"><use href="#edt"/></svg>
<div class="b" style="left:7px;top:335px;width:950px;height:23px;background:#f0f1f3"></div>
<svg class="b" style="left:18.00px;top:340.05px;" width="13.8" height="13.8"><use href="#unc"/></svg>
<svg class="b" style="left:49.70px;top:344.50px;" width="7" height="7"><use href="#xx"/></svg>
<svg class="b" style="left:62.90px;top:340.10px;" width="13.3" height="13.3"><use href="#pen"/></svg>
<svg class="b" style="left:90.80px;top:338.90px;" width="14.2" height="15.2"><use href="#prn"/></svg>
<span class="t" style="left:115.65px;top:342px;font-size:11.5px;color:#3a3a3a;font-weight:normal;font-style:normal;transform:scaleX(1.1717);">19/03/21</span>
<span class="t" style="right:934.90px;top:342px;font-size:11.5px;color:#3a3a3a;font-weight:normal;font-style:normal;transform-origin:100% 50%;transform:scaleX(1.0850);">60</span>
<span class="t" style="left:285.65px;top:342px;font-size:11.5px;color:#555;font-weight:normal;font-style:normal;transform:scaleX(1.0940);text-decoration:underline;">FornecedorApelido - FornecedorRaza</span>
<span class="t" style="left:496.40px;top:342px;font-size:11.5px;color:#555;font-weight:normal;font-style:normal;transform:scaleX(1.0000);">...</span>
<span class="t" style="right:578.90px;top:342px;font-size:11.5px;color:#3a3a3a;font-weight:normal;font-style:normal;transform-origin:100% 50%;transform:scaleX(1.0850);">0,00</span>
<span class="t" style="right:463.60px;top:342px;font-size:11.5px;color:#3a3a3a;font-weight:normal;font-style:normal;transform-origin:100% 50%;transform:scaleX(1.0850);">0,00</span>
<span class="t" style="right:347.20px;top:342px;font-size:11.5px;color:#3a3a3a;font-weight:normal;font-style:normal;transform-origin:100% 50%;transform:scaleX(1.0850);">0,00</span>
<span class="t" style="left:873.60px;top:342px;font-size:11.5px;color:#3a3a3a;font-weight:normal;font-style:normal;transform:scaleX(1.1157);">Digitação</span>
<svg class="b" style="left:931.60px;top:340.65px;" width="14.8" height="14.9"><use href="#edt"/></svg>
<div class="b" style="left:7px;top:358px;width:950px;height:23px;background:#fff"></div>
<svg class="b" style="left:18.00px;top:363.00px;" width="13.8" height="13.8"><use href="#unc"/></svg>
<svg class="b" style="left:49.70px;top:367.45px;" width="7" height="7"><use href="#xx"/></svg>
<svg class="b" style="left:62.90px;top:363.05px;" width="13.3" height="13.3"><use href="#pen"/></svg>
<svg class="b" style="left:90.80px;top:361.85px;" width="14.2" height="15.2"><use href="#prn"/></svg>
<span class="t" style="left:115.65px;top:365px;font-size:11.5px;color:#3a3a3a;font-weight:normal;font-style:normal;transform:scaleX(1.1942);">11/02/21</span>
<span class="t" style="right:934.90px;top:365px;font-size:11.5px;color:#3a3a3a;font-weight:normal;font-style:normal;transform-origin:100% 50%;transform:scaleX(1.0850);">59</span>
<span class="t" style="left:285.65px;top:365px;font-size:11.5px;color:#555;font-weight:normal;font-style:normal;transform:scaleX(1.0940);text-decoration:underline;">FornecedorApelido - FornecedorRaza</span>
<span class="t" style="left:496.40px;top:365px;font-size:11.5px;color:#555;font-weight:normal;font-style:normal;transform:scaleX(1.0000);">...</span>
<span class="t" style="right:578.90px;top:365px;font-size:11.5px;color:#3a3a3a;font-weight:normal;font-style:normal;transform-origin:100% 50%;transform:scaleX(1.0850);">1,22</span>
<span class="t" style="right:463.60px;top:365px;font-size:11.5px;color:#3a3a3a;font-weight:normal;font-style:normal;transform-origin:100% 50%;transform:scaleX(1.0850);">0,00</span>
<span class="t" style="right:347.20px;top:365px;font-size:11.5px;color:#3a3a3a;font-weight:normal;font-style:normal;transform-origin:100% 50%;transform:scaleX(1.0850);">1,22</span>
<span class="t" style="left:873.60px;top:365px;font-size:11.5px;color:#3a3a3a;font-weight:normal;font-style:normal;transform:scaleX(1.1157);">Digitação</span>
<svg class="b" style="left:931.60px;top:363.60px;" width="14.8" height="14.9"><use href="#edt"/></svg>
<div class="b" style="left:7px;top:381px;width:950px;height:23px;background:#f0f1f3"></div>
<svg class="b" style="left:18.00px;top:385.90px;" width="13.8" height="13.8"><use href="#unc"/></svg>
<svg class="b" style="left:49.70px;top:390.35px;" width="7" height="7"><use href="#xx"/></svg>
<svg class="b" style="left:62.90px;top:385.95px;" width="13.3" height="13.3"><use href="#pen"/></svg>
<svg class="b" style="left:90.80px;top:384.75px;" width="14.2" height="15.2"><use href="#prn"/></svg>
<span class="t" style="left:115.65px;top:388px;font-size:11.5px;color:#3a3a3a;font-weight:normal;font-style:normal;transform:scaleX(1.1942);">11/02/21</span>
<span class="t" style="right:934.90px;top:388px;font-size:11.5px;color:#3a3a3a;font-weight:normal;font-style:normal;transform-origin:100% 50%;transform:scaleX(1.0850);">58</span>
<span class="t" style="left:285.65px;top:388px;font-size:11.5px;color:#555;font-weight:normal;font-style:normal;transform:scaleX(1.0940);text-decoration:underline;">FornecedorApelido - FornecedorRaza</span>
<span class="t" style="left:496.40px;top:388px;font-size:11.5px;color:#555;font-weight:normal;font-style:normal;transform:scaleX(1.0000);">...</span>
<span class="t" style="right:578.90px;top:388px;font-size:11.5px;color:#3a3a3a;font-weight:normal;font-style:normal;transform-origin:100% 50%;transform:scaleX(1.0850);">1,22</span>
<span class="t" style="right:463.60px;top:388px;font-size:11.5px;color:#3a3a3a;font-weight:normal;font-style:normal;transform-origin:100% 50%;transform:scaleX(1.0850);">0,00</span>
<span class="t" style="right:347.20px;top:388px;font-size:11.5px;color:#3a3a3a;font-weight:normal;font-style:normal;transform-origin:100% 50%;transform:scaleX(1.0850);">1,22</span>
<span class="t" style="left:873.60px;top:388px;font-size:11.5px;color:#3a3a3a;font-weight:normal;font-style:normal;transform:scaleX(1.1157);">Digitação</span>
<svg class="b" style="left:931.60px;top:386.50px;" width="14.8" height="14.9"><use href="#edt"/></svg>
<div class="b" style="left:7px;top:404px;width:950px;height:23px;background:#fff"></div>
<svg class="b" style="left:18.00px;top:408.90px;" width="13.8" height="13.8"><use href="#unc"/></svg>
<svg class="b" style="left:49.70px;top:413.35px;" width="7" height="7"><use href="#xx"/></svg>
<svg class="b" style="left:62.90px;top:408.95px;" width="13.3" height="13.3"><use href="#pen"/></svg>
<svg class="b" style="left:90.80px;top:407.75px;" width="14.2" height="15.2"><use href="#prn"/></svg>
<span class="t" style="left:115.65px;top:411px;font-size:11.5px;color:#3a3a3a;font-weight:normal;font-style:normal;transform:scaleX(1.1717);">07/01/21</span>
<span class="t" style="right:934.90px;top:411px;font-size:11.5px;color:#3a3a3a;font-weight:normal;font-style:normal;transform-origin:100% 50%;transform:scaleX(1.0850);">57</span>
<span class="t" style="left:285.65px;top:411px;font-size:11.5px;color:#555;font-weight:normal;font-style:normal;transform:scaleX(1.0940);text-decoration:underline;">FornecedorApelido - FornecedorRaza</span>
<span class="t" style="left:496.40px;top:411px;font-size:11.5px;color:#555;font-weight:normal;font-style:normal;transform:scaleX(1.0000);">...</span>
<span class="t" style="right:578.90px;top:411px;font-size:11.5px;color:#3a3a3a;font-weight:normal;font-style:normal;transform-origin:100% 50%;transform:scaleX(1.0850);">0,00</span>
<span class="t" style="right:463.60px;top:411px;font-size:11.5px;color:#3a3a3a;font-weight:normal;font-style:normal;transform-origin:100% 50%;transform:scaleX(1.0850);">0,00</span>
<span class="t" style="right:347.20px;top:411px;font-size:11.5px;color:#3a3a3a;font-weight:normal;font-style:normal;transform-origin:100% 50%;transform:scaleX(1.0850);">0,00</span>
<span class="t" style="left:873.60px;top:411px;font-size:11.5px;color:#3a3a3a;font-weight:normal;font-style:normal;transform:scaleX(1.1157);">Digitação</span>
<svg class="b" style="left:931.60px;top:409.50px;" width="14.8" height="14.9"><use href="#edt"/></svg>
<div class="b" style="left:7px;top:427px;width:950px;height:22px;background:#f0f1f3"></div>
<svg class="b" style="left:18.00px;top:431.35px;" width="13.8" height="13.8"><use href="#unc"/></svg>
<svg class="b" style="left:49.70px;top:435.80px;" width="7" height="7"><use href="#xx"/></svg>
<svg class="b" style="left:62.90px;top:431.40px;" width="13.3" height="13.3"><use href="#pen"/></svg>
<svg class="b" style="left:90.80px;top:430.20px;" width="14.2" height="15.2"><use href="#prn"/></svg>
<span class="t" style="left:115.65px;top:433px;font-size:11.5px;color:#3a3a3a;font-weight:normal;font-style:normal;transform:scaleX(1.1942);">04/11/20</span>
<span class="t" style="right:934.90px;top:433px;font-size:11.5px;color:#3a3a3a;font-weight:normal;font-style:normal;transform-origin:100% 50%;transform:scaleX(1.0850);">56</span>
<span class="t" style="left:285.65px;top:433px;font-size:11.5px;color:#555;font-weight:normal;font-style:normal;transform:scaleX(1.0940);text-decoration:underline;">FornecedorApelido - FornecedorRaza</span>
<span class="t" style="left:496.40px;top:433px;font-size:11.5px;color:#555;font-weight:normal;font-style:normal;transform:scaleX(1.0000);">...</span>
<span class="t" style="right:578.90px;top:433px;font-size:11.5px;color:#3a3a3a;font-weight:normal;font-style:normal;transform-origin:100% 50%;transform:scaleX(1.0850);">10,98</span>
<span class="t" style="right:463.60px;top:433px;font-size:11.5px;color:#3a3a3a;font-weight:normal;font-style:normal;transform-origin:100% 50%;transform:scaleX(1.0850);">0,00</span>
<span class="t" style="right:347.20px;top:433px;font-size:11.5px;color:#3a3a3a;font-weight:normal;font-style:normal;transform-origin:100% 50%;transform:scaleX(1.0850);">10,98</span>
<span class="t" style="left:873.60px;top:433px;font-size:11.5px;color:#3a3a3a;font-weight:normal;font-style:normal;transform:scaleX(1.1252);">Aprovado</span>
<div class="b" style="left:7px;top:449px;width:950px;height:21px;background:#fff"></div>
<svg class="b" style="left:18.00px;top:452.80px;" width="13.8" height="13.8"><use href="#unc"/></svg>
<svg class="b" style="left:49.70px;top:457.25px;" width="7" height="7"><use href="#xx"/></svg>
<svg class="b" style="left:62.90px;top:452.85px;" width="13.3" height="13.3"><use href="#pen"/></svg>
<svg class="b" style="left:90.80px;top:451.65px;" width="14.2" height="15.2"><use href="#prn"/></svg>
<span class="t" style="left:115.65px;top:455px;font-size:11.5px;color:#3a3a3a;font-weight:normal;font-style:normal;transform:scaleX(1.1717);">30/10/20</span>
<span class="t" style="right:934.90px;top:455px;font-size:11.5px;color:#3a3a3a;font-weight:normal;font-style:normal;transform-origin:100% 50%;transform:scaleX(1.0850);">55</span>
<span class="t" style="left:285.65px;top:455px;font-size:11.5px;color:#555;font-weight:normal;font-style:normal;transform:scaleX(1.0940);text-decoration:underline;">FornecedorApelido - FornecedorRaza</span>
<span class="t" style="left:496.40px;top:455px;font-size:11.5px;color:#555;font-weight:normal;font-style:normal;transform:scaleX(1.0000);">...</span>
<span class="t" style="right:578.90px;top:455px;font-size:11.5px;color:#3a3a3a;font-weight:normal;font-style:normal;transform-origin:100% 50%;transform:scaleX(1.0850);">7,98</span>
<span class="t" style="right:463.60px;top:455px;font-size:11.5px;color:#3a3a3a;font-weight:normal;font-style:normal;transform-origin:100% 50%;transform:scaleX(1.0850);">0,00</span>
<span class="t" style="right:347.20px;top:455px;font-size:11.5px;color:#3a3a3a;font-weight:normal;font-style:normal;transform-origin:100% 50%;transform:scaleX(1.0850);">7,98</span>
<span class="t" style="left:873.60px;top:455px;font-size:11.5px;color:#3a3a3a;font-weight:normal;font-style:normal;transform:scaleX(1.1252);">Aprovado</span>
<div class="b" style="left:7px;top:470px;width:950px;height:21px;background:#f0f1f3"></div>
<svg class="b" style="left:18.00px;top:473.90px;" width="13.8" height="13.8"><use href="#unc"/></svg>
<svg class="b" style="left:49.70px;top:478.35px;" width="7" height="7"><use href="#xx"/></svg>
<svg class="b" style="left:62.90px;top:473.95px;" width="13.3" height="13.3"><use href="#pen"/></svg>
<svg class="b" style="left:90.80px;top:472.75px;" width="14.2" height="15.2"><use href="#prn"/></svg>
<span class="t" style="left:115.65px;top:476px;font-size:11.5px;color:#3a3a3a;font-weight:normal;font-style:normal;transform:scaleX(1.1717);">24/04/20</span>
<span class="t" style="right:934.90px;top:476px;font-size:11.5px;color:#3a3a3a;font-weight:normal;font-style:normal;transform-origin:100% 50%;transform:scaleX(1.0850);">53</span>
<span class="t" style="left:285.65px;top:476px;font-size:11.5px;color:#555;font-weight:normal;font-style:normal;transform:scaleX(1.0940);text-decoration:underline;">FornecedorApelido - FornecedorRaza</span>
<span class="t" style="left:496.40px;top:476px;font-size:11.5px;color:#555;font-weight:normal;font-style:normal;transform:scaleX(1.0000);">...</span>
<span class="t" style="right:578.90px;top:476px;font-size:11.5px;color:#3a3a3a;font-weight:normal;font-style:normal;transform-origin:100% 50%;transform:scaleX(1.0850);">20,00</span>
<span class="t" style="right:463.60px;top:476px;font-size:11.5px;color:#3a3a3a;font-weight:normal;font-style:normal;transform-origin:100% 50%;transform:scaleX(1.0850);">0,00</span>
<span class="t" style="right:347.20px;top:476px;font-size:11.5px;color:#3a3a3a;font-weight:normal;font-style:normal;transform-origin:100% 50%;transform:scaleX(1.0850);">20,00</span>
<span class="t" style="left:873.60px;top:476px;font-size:11.5px;color:#3a3a3a;font-weight:normal;font-style:normal;transform:scaleX(1.1252);">Aprovado</span>
<div class="b" style="left:7px;top:491px;width:950px;height:22px;background:#fff"></div>
<svg class="b" style="left:18.00px;top:495.40px;" width="13.8" height="13.8"><use href="#unc"/></svg>
<svg class="b" style="left:49.70px;top:499.85px;" width="7" height="7"><use href="#xx"/></svg>
<svg class="b" style="left:62.90px;top:495.45px;" width="13.3" height="13.3"><use href="#pen"/></svg>
<svg class="b" style="left:90.80px;top:494.25px;" width="14.2" height="15.2"><use href="#prn"/></svg>
<span class="t" style="left:115.65px;top:497px;font-size:11.5px;color:#3a3a3a;font-weight:normal;font-style:normal;transform:scaleX(1.1717);">15/04/20</span>
<span class="t" style="right:934.90px;top:497px;font-size:11.5px;color:#3a3a3a;font-weight:normal;font-style:normal;transform-origin:100% 50%;transform:scaleX(1.0850);">52</span>
<span class="t" style="left:285.65px;top:497px;font-size:11.5px;color:#555;font-weight:normal;font-style:normal;transform:scaleX(1.0940);text-decoration:underline;">FornecedorApelido - FornecedorRaza</span>
<span class="t" style="left:496.40px;top:497px;font-size:11.5px;color:#555;font-weight:normal;font-style:normal;transform:scaleX(1.0000);">...</span>
<span class="t" style="right:578.90px;top:497px;font-size:11.5px;color:#3a3a3a;font-weight:normal;font-style:normal;transform-origin:100% 50%;transform:scaleX(1.0850);">20,00</span>
<span class="t" style="right:463.60px;top:497px;font-size:11.5px;color:#3a3a3a;font-weight:normal;font-style:normal;transform-origin:100% 50%;transform:scaleX(1.0850);">0,00</span>
<span class="t" style="right:347.20px;top:497px;font-size:11.5px;color:#3a3a3a;font-weight:normal;font-style:normal;transform-origin:100% 50%;transform:scaleX(1.0850);">20,00</span>
<span class="t" style="left:873.60px;top:497px;font-size:11.5px;color:#3a3a3a;font-weight:normal;font-style:normal;transform:scaleX(1.1252);">Aprovado</span>
<div class="b" style="left:7px;top:513px;width:950px;height:22px;background:#f0f1f3"></div>
<svg class="b" style="left:18.00px;top:517.40px;" width="13.8" height="13.8"><use href="#unc"/></svg>
<svg class="b" style="left:49.70px;top:521.85px;" width="7" height="7"><use href="#xx"/></svg>
<svg class="b" style="left:62.90px;top:517.45px;" width="13.3" height="13.3"><use href="#pen"/></svg>
<svg class="b" style="left:90.80px;top:516.25px;" width="14.2" height="15.2"><use href="#prn"/></svg>
<span class="t" style="left:115.65px;top:519px;font-size:11.5px;color:#3a3a3a;font-weight:normal;font-style:normal;transform:scaleX(1.1717);">13/04/20</span>
<span class="t" style="right:934.90px;top:519px;font-size:11.5px;color:#3a3a3a;font-weight:normal;font-style:normal;transform-origin:100% 50%;transform:scaleX(1.0850);">51</span>
<span class="t" style="left:285.65px;top:519px;font-size:11.5px;color:#555;font-weight:normal;font-style:normal;transform:scaleX(1.0833);text-decoration:underline;">#066 - LOJAS AMERICANAS S/A</span>
<span class="t" style="right:578.90px;top:519px;font-size:11.5px;color:#3a3a3a;font-weight:normal;font-style:normal;transform-origin:100% 50%;transform:scaleX(1.0850);">8,00</span>
<span class="t" style="right:463.60px;top:519px;font-size:11.5px;color:#3a3a3a;font-weight:normal;font-style:normal;transform-origin:100% 50%;transform:scaleX(1.0850);">0,00</span>
<span class="t" style="right:347.20px;top:519px;font-size:11.5px;color:#3a3a3a;font-weight:normal;font-style:normal;transform-origin:100% 50%;transform:scaleX(1.0850);">8,00</span>
<span class="t" style="left:873.60px;top:519px;font-size:11.5px;color:#3a3a3a;font-weight:normal;font-style:normal;transform:scaleX(1.1157);">Digitação</span>
<svg class="b" style="left:931.60px;top:518.00px;" width="14.8" height="14.9"><use href="#edt"/></svg>
<div class="b" style="left:7px;top:535px;width:950px;height:22px;background:#fff"></div>
<svg class="b" style="left:18.00px;top:539.50px;" width="13.8" height="13.8"><use href="#unc"/></svg>
<svg class="b" style="left:49.70px;top:543.95px;" width="7" height="7"><use href="#xx"/></svg>
<svg class="b" style="left:62.90px;top:539.55px;" width="13.3" height="13.3"><use href="#pen"/></svg>
<svg class="b" style="left:90.80px;top:538.35px;" width="14.2" height="15.2"><use href="#prn"/></svg>
<span class="t" style="left:115.65px;top:541px;font-size:11.5px;color:#3a3a3a;font-weight:normal;font-style:normal;transform:scaleX(1.1717);">19/03/20</span>
<span class="t" style="right:934.90px;top:541px;font-size:11.5px;color:#3a3a3a;font-weight:normal;font-style:normal;transform-origin:100% 50%;transform:scaleX(1.0850);">50</span>
<span class="t" style="left:285.65px;top:541px;font-size:11.5px;color:#555;font-weight:normal;font-style:normal;transform:scaleX(1.0940);text-decoration:underline;">FornecedorApelido - FornecedorRaza</span>
<span class="t" style="left:496.40px;top:541px;font-size:11.5px;color:#555;font-weight:normal;font-style:normal;transform:scaleX(1.0000);">...</span>
<span class="t" style="right:578.90px;top:541px;font-size:11.5px;color:#3a3a3a;font-weight:normal;font-style:normal;transform-origin:100% 50%;transform:scaleX(1.0850);">51.282,00</span>
<span class="t" style="right:463.60px;top:541px;font-size:11.5px;color:#3a3a3a;font-weight:normal;font-style:normal;transform-origin:100% 50%;transform:scaleX(1.0850);">0,00</span>
<span class="t" style="right:347.20px;top:541px;font-size:11.5px;color:#3a3a3a;font-weight:normal;font-style:normal;transform-origin:100% 50%;transform:scaleX(1.0850);">51.282,00</span>
<span class="t" style="left:873.60px;top:541px;font-size:11.5px;color:#3a3a3a;font-weight:normal;font-style:normal;transform:scaleX(1.1252);">Aprovado</span>
<div class="b" style="left:7px;top:557px;width:950px;height:23px;background:#f0f1f3"></div>
<svg class="b" style="left:18.00px;top:561.85px;" width="13.8" height="13.8"><use href="#unc"/></svg>
<svg class="b" style="left:49.70px;top:566.30px;" width="7" height="7"><use href="#xx"/></svg>
<svg class="b" style="left:62.90px;top:561.90px;" width="13.3" height="13.3"><use href="#pen"/></svg>
<svg class="b" style="left:90.80px;top:560.70px;" width="14.2" height="15.2"><use href="#prn"/></svg>
<span class="t" style="left:115.65px;top:564px;font-size:11.5px;color:#3a3a3a;font-weight:normal;font-style:normal;transform:scaleX(1.1717);">19/03/20</span>
<span class="t" style="right:934.90px;top:564px;font-size:11.5px;color:#3a3a3a;font-weight:normal;font-style:normal;transform-origin:100% 50%;transform:scaleX(1.0850);">48</span>
<span class="t" style="left:285.65px;top:564px;font-size:11.5px;color:#555;font-weight:normal;font-style:normal;transform:scaleX(1.0940);text-decoration:underline;">FornecedorApelido - FornecedorRaza</span>
<span class="t" style="left:496.40px;top:564px;font-size:11.5px;color:#555;font-weight:normal;font-style:normal;transform:scaleX(1.0000);">...</span>
<span class="t" style="right:578.90px;top:564px;font-size:11.5px;color:#3a3a3a;font-weight:normal;font-style:normal;transform-origin:100% 50%;transform:scaleX(1.0850);">66,00</span>
<span class="t" style="right:463.60px;top:564px;font-size:11.5px;color:#3a3a3a;font-weight:normal;font-style:normal;transform-origin:100% 50%;transform:scaleX(1.0850);">0,00</span>
<span class="t" style="right:347.20px;top:564px;font-size:11.5px;color:#3a3a3a;font-weight:normal;font-style:normal;transform-origin:100% 50%;transform:scaleX(1.0850);">66,00</span>
<span class="t" style="left:873.60px;top:564px;font-size:11.5px;color:#3a3a3a;font-weight:normal;font-style:normal;transform:scaleX(1.1157);">Digitação</span>
<svg class="b" style="left:931.60px;top:562.45px;" width="14.8" height="14.9"><use href="#edt"/></svg>
<div class="b" style="left:7px;top:580px;width:950px;height:21px;background:#fff"></div>
<svg class="b" style="left:18.00px;top:583.80px;" width="13.8" height="13.8"><use href="#unc"/></svg>
<svg class="b" style="left:49.70px;top:588.25px;" width="7" height="7"><use href="#xx"/></svg>
<svg class="b" style="left:62.90px;top:583.85px;" width="13.3" height="13.3"><use href="#pen"/></svg>
<svg class="b" style="left:90.80px;top:582.65px;" width="14.2" height="15.2"><use href="#prn"/></svg>
<span class="t" style="left:115.65px;top:586px;font-size:11.5px;color:#3a3a3a;font-weight:normal;font-style:normal;transform:scaleX(1.1717);">07/02/20</span>
<span class="t" style="right:934.90px;top:586px;font-size:11.5px;color:#3a3a3a;font-weight:normal;font-style:normal;transform-origin:100% 50%;transform:scaleX(1.0850);">45</span>
<span class="t" style="left:285.65px;top:586px;font-size:11.5px;color:#555;font-weight:normal;font-style:normal;transform:scaleX(1.1170);text-decoration:underline;">Oliveira Ltda - LCO</span>
<span class="t" style="right:578.90px;top:586px;font-size:11.5px;color:#3a3a3a;font-weight:normal;font-style:normal;transform-origin:100% 50%;transform:scaleX(1.0850);">600,00</span>
<span class="t" style="right:463.60px;top:586px;font-size:11.5px;color:#3a3a3a;font-weight:normal;font-style:normal;transform-origin:100% 50%;transform:scaleX(1.0850);">0,00</span>
<span class="t" style="right:347.20px;top:586px;font-size:11.5px;color:#3a3a3a;font-weight:normal;font-style:normal;transform-origin:100% 50%;transform:scaleX(1.0850);">600,00</span>
<span class="t" style="left:873.60px;top:586px;font-size:11.5px;color:#3a3a3a;font-weight:normal;font-style:normal;transform:scaleX(1.1252);">Aprovado</span>
<div class="b" style="left:7px;top:601px;width:950px;height:21px;background:#f0f1f3"></div>
<svg class="b" style="left:18.00px;top:604.85px;" width="13.8" height="13.8"><use href="#unc"/></svg>
<svg class="b" style="left:49.70px;top:609.30px;" width="7" height="7"><use href="#xx"/></svg>
<svg class="b" style="left:62.90px;top:604.90px;" width="13.3" height="13.3"><use href="#pen"/></svg>
<svg class="b" style="left:90.80px;top:603.70px;" width="14.2" height="15.2"><use href="#prn"/></svg>
<span class="t" style="left:115.65px;top:607px;font-size:11.5px;color:#3a3a3a;font-weight:normal;font-style:normal;transform:scaleX(1.1717);">23/01/20</span>
<span class="t" style="right:934.90px;top:607px;font-size:11.5px;color:#3a3a3a;font-weight:normal;font-style:normal;transform-origin:100% 50%;transform:scaleX(1.0850);">44</span>
<span class="t" style="left:285.65px;top:607px;font-size:11.5px;color:#555;font-weight:normal;font-style:normal;transform:scaleX(1.1170);text-decoration:underline;">Oliveira Ltda - LCO</span>
<span class="t" style="right:578.90px;top:607px;font-size:11.5px;color:#3a3a3a;font-weight:normal;font-style:normal;transform-origin:100% 50%;transform:scaleX(1.0850);">600,00</span>
<span class="t" style="right:463.60px;top:607px;font-size:11.5px;color:#3a3a3a;font-weight:normal;font-style:normal;transform-origin:100% 50%;transform:scaleX(1.0850);">0,00</span>
<span class="t" style="right:347.20px;top:607px;font-size:11.5px;color:#3a3a3a;font-weight:normal;font-style:normal;transform-origin:100% 50%;transform:scaleX(1.0850);">600,00</span>
<span class="t" style="left:873.60px;top:607px;font-size:11.5px;color:#3a3a3a;font-weight:normal;font-style:normal;transform:scaleX(1.1252);">Aprovado</span>
<div class="b" style="left:7px;top:622px;width:950px;height:22px;background:#fff"></div>
<svg class="b" style="left:18.00px;top:626.35px;" width="13.8" height="13.8"><use href="#unc"/></svg>
<svg class="b" style="left:49.70px;top:630.80px;" width="7" height="7"><use href="#xx"/></svg>
<svg class="b" style="left:62.90px;top:626.40px;" width="13.3" height="13.3"><use href="#pen"/></svg>
<svg class="b" style="left:90.80px;top:625.20px;" width="14.2" height="15.2"><use href="#prn"/></svg>
<span class="t" style="left:115.65px;top:628px;font-size:11.5px;color:#3a3a3a;font-weight:normal;font-style:normal;transform:scaleX(1.1717);">23/01/20</span>
<span class="t" style="right:934.90px;top:628px;font-size:11.5px;color:#3a3a3a;font-weight:normal;font-style:normal;transform-origin:100% 50%;transform:scaleX(1.0850);">43</span>
<span class="t" style="left:285.65px;top:628px;font-size:11.5px;color:#555;font-weight:normal;font-style:normal;transform:scaleX(1.0940);text-decoration:underline;">FornecedorApelido - FornecedorRaza</span>
<span class="t" style="left:496.40px;top:628px;font-size:11.5px;color:#555;font-weight:normal;font-style:normal;transform:scaleX(1.0000);">...</span>
<span class="t" style="right:578.90px;top:628px;font-size:11.5px;color:#3a3a3a;font-weight:normal;font-style:normal;transform-origin:100% 50%;transform:scaleX(1.0850);">600,00</span>
<span class="t" style="right:463.60px;top:628px;font-size:11.5px;color:#3a3a3a;font-weight:normal;font-style:normal;transform-origin:100% 50%;transform:scaleX(1.0850);">0,00</span>
<span class="t" style="right:347.20px;top:628px;font-size:11.5px;color:#3a3a3a;font-weight:normal;font-style:normal;transform-origin:100% 50%;transform:scaleX(1.0850);">600,00</span>
<span class="t" style="left:873.60px;top:628px;font-size:11.5px;color:#3a3a3a;font-weight:normal;font-style:normal;transform:scaleX(1.1252);">Aprovado</span>
<div class="b" style="left:7px;top:644px;width:950px;height:21px;background:#f0f1f3"></div>
<svg class="b" style="left:18.00px;top:647.90px;" width="13.8" height="13.8"><use href="#unc"/></svg>
<svg class="b" style="left:49.70px;top:652.35px;" width="7" height="7"><use href="#xx"/></svg>
<svg class="b" style="left:62.90px;top:647.95px;" width="13.3" height="13.3"><use href="#pen"/></svg>
<svg class="b" style="left:90.80px;top:646.75px;" width="14.2" height="15.2"><use href="#prn"/></svg>
<span class="t" style="left:115.65px;top:650px;font-size:11.5px;color:#3a3a3a;font-weight:normal;font-style:normal;transform:scaleX(1.1717);">19/12/19</span>
<span class="t" style="right:934.90px;top:650px;font-size:11.5px;color:#3a3a3a;font-weight:normal;font-style:normal;transform-origin:100% 50%;transform:scaleX(1.0850);">42</span>
<span class="t" style="left:285.65px;top:650px;font-size:11.5px;color:#555;font-weight:normal;font-style:normal;transform:scaleX(1.0488);text-decoration:underline;">EMP-Filial01 - EMP-Filial01</span>
<span class="t" style="right:578.90px;top:650px;font-size:11.5px;color:#3a3a3a;font-weight:normal;font-style:normal;transform-origin:100% 50%;transform:scaleX(1.0850);">6,00</span>
<span class="t" style="right:463.60px;top:650px;font-size:11.5px;color:#3a3a3a;font-weight:normal;font-style:normal;transform-origin:100% 50%;transform:scaleX(1.0850);">0,00</span>
<span class="t" style="right:347.20px;top:650px;font-size:11.5px;color:#3a3a3a;font-weight:normal;font-style:normal;transform-origin:100% 50%;transform:scaleX(1.0850);">6,00</span>
<span class="t" style="left:873.60px;top:650px;font-size:11.5px;color:#3a3a3a;font-weight:normal;font-style:normal;transform:scaleX(1.1252);">Aprovado</span>
<div class="b" style="left:7px;top:665px;width:950px;height:21px;background:#fff"></div>
<svg class="b" style="left:18.00px;top:668.90px;" width="13.8" height="13.8"><use href="#unc"/></svg>
<svg class="b" style="left:49.70px;top:673.35px;" width="7" height="7"><use href="#xx"/></svg>
<svg class="b" style="left:62.90px;top:668.95px;" width="13.3" height="13.3"><use href="#pen"/></svg>
<svg class="b" style="left:90.80px;top:667.75px;" width="14.2" height="15.2"><use href="#prn"/></svg>
<span class="t" style="left:115.65px;top:671px;font-size:11.5px;color:#3a3a3a;font-weight:normal;font-style:normal;transform:scaleX(1.1717);">19/12/19</span>
<span class="t" style="right:934.90px;top:671px;font-size:11.5px;color:#3a3a3a;font-weight:normal;font-style:normal;transform-origin:100% 50%;transform:scaleX(1.0850);">41</span>
<span class="t" style="left:285.65px;top:671px;font-size:11.5px;color:#555;font-weight:normal;font-style:normal;transform:scaleX(1.0940);text-decoration:underline;">FornecedorApelido - FornecedorRaza</span>
<span class="t" style="left:496.40px;top:671px;font-size:11.5px;color:#555;font-weight:normal;font-style:normal;transform:scaleX(1.0000);">...</span>
<span class="t" style="right:578.90px;top:671px;font-size:11.5px;color:#3a3a3a;font-weight:normal;font-style:normal;transform-origin:100% 50%;transform:scaleX(1.0850);">600,00</span>
<span class="t" style="right:463.60px;top:671px;font-size:11.5px;color:#3a3a3a;font-weight:normal;font-style:normal;transform-origin:100% 50%;transform:scaleX(1.0850);">0,00</span>
<span class="t" style="right:347.20px;top:671px;font-size:11.5px;color:#3a3a3a;font-weight:normal;font-style:normal;transform-origin:100% 50%;transform:scaleX(1.0850);">600,00</span>
<span class="t" style="left:873.60px;top:671px;font-size:11.5px;color:#3a3a3a;font-weight:normal;font-style:normal;transform:scaleX(1.1252);">Aprovado</span>
<div class="b" style="left:7px;top:686px;width:950px;height:23px;background:#f0f1f3"></div>
<svg class="b" style="left:18.00px;top:690.85px;" width="13.8" height="13.8"><use href="#unc"/></svg>
<svg class="b" style="left:49.70px;top:695.30px;" width="7" height="7"><use href="#xx"/></svg>
<svg class="b" style="left:62.90px;top:690.90px;" width="13.3" height="13.3"><use href="#pen"/></svg>
<svg class="b" style="left:90.80px;top:689.70px;" width="14.2" height="15.2"><use href="#prn"/></svg>
<span class="t" style="left:115.65px;top:693px;font-size:11.5px;color:#3a3a3a;font-weight:normal;font-style:normal;transform:scaleX(1.1717);">10/12/19</span>
<span class="t" style="right:934.90px;top:693px;font-size:11.5px;color:#3a3a3a;font-weight:normal;font-style:normal;transform-origin:100% 50%;transform:scaleX(1.0850);">40</span>
<span class="t" style="left:285.65px;top:693px;font-size:11.5px;color:#555;font-weight:normal;font-style:normal;transform:scaleX(1.0940);text-decoration:underline;">FornecedorApelido - FornecedorRaza</span>
<span class="t" style="left:496.40px;top:693px;font-size:11.5px;color:#555;font-weight:normal;font-style:normal;transform:scaleX(1.0000);">...</span>
<span class="t" style="right:578.90px;top:693px;font-size:11.5px;color:#3a3a3a;font-weight:normal;font-style:normal;transform-origin:100% 50%;transform:scaleX(1.0850);">0,00</span>
<span class="t" style="right:463.60px;top:693px;font-size:11.5px;color:#3a3a3a;font-weight:normal;font-style:normal;transform-origin:100% 50%;transform:scaleX(1.0850);">0,00</span>
<span class="t" style="right:347.20px;top:693px;font-size:11.5px;color:#3a3a3a;font-weight:normal;font-style:normal;transform-origin:100% 50%;transform:scaleX(1.0850);">0,00</span>
<span class="t" style="left:873.60px;top:693px;font-size:11.5px;color:#3a3a3a;font-weight:normal;font-style:normal;transform:scaleX(1.1157);">Digitação</span>
<svg class="b" style="left:931.60px;top:691.45px;" width="14.8" height="14.9"><use href="#edt"/></svg>
<div class="b" style="left:7px;top:709px;width:950px;height:22px;background:#fff"></div>
<svg class="b" style="left:18.00px;top:713.40px;" width="13.8" height="13.8"><use href="#unc"/></svg>
<svg class="b" style="left:49.70px;top:717.85px;" width="7" height="7"><use href="#xx"/></svg>
<svg class="b" style="left:62.90px;top:713.45px;" width="13.3" height="13.3"><use href="#pen"/></svg>
<svg class="b" style="left:90.80px;top:712.25px;" width="14.2" height="15.2"><use href="#prn"/></svg>
<span class="t" style="left:115.65px;top:715px;font-size:11.5px;color:#3a3a3a;font-weight:normal;font-style:normal;transform:scaleX(1.1942);">14/11/19</span>
<span class="t" style="right:934.90px;top:715px;font-size:11.5px;color:#3a3a3a;font-weight:normal;font-style:normal;transform-origin:100% 50%;transform:scaleX(1.0850);">39</span>
<span class="t" style="left:285.65px;top:715px;font-size:11.5px;color:#555;font-weight:normal;font-style:normal;transform:scaleX(1.0940);text-decoration:underline;">FornecedorApelido - FornecedorRaza</span>
<span class="t" style="left:496.40px;top:715px;font-size:11.5px;color:#555;font-weight:normal;font-style:normal;transform:scaleX(1.0000);">...</span>
<span class="t" style="right:578.90px;top:715px;font-size:11.5px;color:#3a3a3a;font-weight:normal;font-style:normal;transform-origin:100% 50%;transform:scaleX(1.0850);">1,00</span>
<span class="t" style="right:463.60px;top:715px;font-size:11.5px;color:#3a3a3a;font-weight:normal;font-style:normal;transform-origin:100% 50%;transform:scaleX(1.0850);">0,00</span>
<span class="t" style="right:347.20px;top:715px;font-size:11.5px;color:#3a3a3a;font-weight:normal;font-style:normal;transform-origin:100% 50%;transform:scaleX(1.0850);">1,00</span>
<span class="t" style="left:873.60px;top:715px;font-size:11.5px;color:#3a3a3a;font-weight:normal;font-style:normal;transform:scaleX(1.1252);">Aprovado</span>
<div class="b" style="left:7px;top:731px;width:950px;height:21px;background:#f0f1f3"></div>
<svg class="b" style="left:18.00px;top:735.00px;" width="13.8" height="13.8"><use href="#unc"/></svg>
<svg class="b" style="left:49.70px;top:739.45px;" width="7" height="7"><use href="#xx"/></svg>
<svg class="b" style="left:62.90px;top:735.05px;" width="13.3" height="13.3"><use href="#pen"/></svg>
<svg class="b" style="left:90.80px;top:733.85px;" width="14.2" height="15.2"><use href="#prn"/></svg>
<span class="t" style="left:115.65px;top:737px;font-size:11.5px;color:#3a3a3a;font-weight:normal;font-style:normal;transform:scaleX(1.1717);">14/10/19</span>
<span class="t" style="right:934.90px;top:737px;font-size:11.5px;color:#3a3a3a;font-weight:normal;font-style:normal;transform-origin:100% 50%;transform:scaleX(1.0850);">37</span>
<span class="t" style="left:285.65px;top:737px;font-size:11.5px;color:#555;font-weight:normal;font-style:normal;transform:scaleX(1.0940);text-decoration:underline;">FornecedorApelido - FornecedorRaza</span>
<span class="t" style="left:496.40px;top:737px;font-size:11.5px;color:#555;font-weight:normal;font-style:normal;transform:scaleX(1.0000);">...</span>
<span class="t" style="right:578.90px;top:737px;font-size:11.5px;color:#3a3a3a;font-weight:normal;font-style:normal;transform-origin:100% 50%;transform:scaleX(1.0850);">1,00</span>
<span class="t" style="right:463.60px;top:737px;font-size:11.5px;color:#3a3a3a;font-weight:normal;font-style:normal;transform-origin:100% 50%;transform:scaleX(1.0850);">0,00</span>
<span class="t" style="right:347.20px;top:737px;font-size:11.5px;color:#3a3a3a;font-weight:normal;font-style:normal;transform-origin:100% 50%;transform:scaleX(1.0850);">1,00</span>
<span class="t" style="left:873.60px;top:737px;font-size:11.5px;color:#3a3a3a;font-weight:normal;font-style:normal;transform:scaleX(1.1252);">Aprovado</span>
<div class="b" style="left:7px;top:752px;width:950px;height:23px;background:#fff"></div>
<svg class="b" style="left:18.00px;top:756.55px;" width="13.8" height="13.8"><use href="#unc"/></svg>
<svg class="b" style="left:49.70px;top:761.00px;" width="7" height="7"><use href="#xx"/></svg>
<svg class="b" style="left:62.90px;top:756.60px;" width="13.3" height="13.3"><use href="#pen"/></svg>
<svg class="b" style="left:90.80px;top:755.40px;" width="14.2" height="15.2"><use href="#prn"/></svg>
<span class="t" style="left:115.65px;top:758px;font-size:11.5px;color:#3a3a3a;font-weight:normal;font-style:normal;transform:scaleX(1.1717);">20/08/19</span>
<span class="t" style="right:934.90px;top:758px;font-size:11.5px;color:#3a3a3a;font-weight:normal;font-style:normal;transform-origin:100% 50%;transform:scaleX(1.0850);">35</span>
<span class="t" style="left:285.65px;top:758px;font-size:11.5px;color:#555;font-weight:normal;font-style:normal;transform:scaleX(1.0940);text-decoration:underline;">FornecedorApelido - FornecedorRaza</span>
<span class="t" style="left:496.40px;top:758px;font-size:11.5px;color:#555;font-weight:normal;font-style:normal;transform:scaleX(1.0000);">...</span>
<span class="t" style="right:578.90px;top:758px;font-size:11.5px;color:#3a3a3a;font-weight:normal;font-style:normal;transform-origin:100% 50%;transform:scaleX(1.0850);">0,00</span>
<span class="t" style="right:463.60px;top:758px;font-size:11.5px;color:#3a3a3a;font-weight:normal;font-style:normal;transform-origin:100% 50%;transform:scaleX(1.0850);">0,00</span>
<span class="t" style="right:347.20px;top:758px;font-size:11.5px;color:#3a3a3a;font-weight:normal;font-style:normal;transform-origin:100% 50%;transform:scaleX(1.0850);">0,00</span>
<span class="t" style="left:873.60px;top:758px;font-size:11.5px;color:#3a3a3a;font-weight:normal;font-style:normal;transform:scaleX(1.1157);">Digitação</span>
<svg class="b" style="left:931.60px;top:757.15px;" width="14.8" height="14.9"><use href="#edt"/></svg>
<div class="b" style="left:45px;top:178px;width:1px;height:597px;background:#cfd3d8"></div>
<div class="b" style="left:45px;top:178px;width:1px;height:21px;background:#e6e3da"></div>
<div class="b" style="left:83px;top:178px;width:1px;height:597px;background:#cfd3d8"></div>
<div class="b" style="left:83px;top:178px;width:1px;height:21px;background:#e6e3da"></div>
<div class="b" style="left:109px;top:178px;width:1px;height:597px;background:#cfd3d8"></div>
<div class="b" style="left:109px;top:178px;width:1px;height:21px;background:#e6e3da"></div>
<div class="b" style="left:189px;top:178px;width:1px;height:597px;background:#cfd3d8"></div>
<div class="b" style="left:189px;top:178px;width:1px;height:21px;background:#e6e3da"></div>
<div class="b" style="left:279px;top:178px;width:1px;height:597px;background:#cfd3d8"></div>
<div class="b" style="left:279px;top:178px;width:1px;height:21px;background:#e6e3da"></div>
<div class="b" style="left:519px;top:178px;width:1px;height:597px;background:#cfd3d8"></div>
<div class="b" style="left:519px;top:178px;width:1px;height:21px;background:#e6e3da"></div>
<div class="b" style="left:635px;top:178px;width:1px;height:597px;background:#cfd3d8"></div>
<div class="b" style="left:635px;top:178px;width:1px;height:21px;background:#e6e3da"></div>
<div class="b" style="left:751px;top:178px;width:1px;height:597px;background:#cfd3d8"></div>
<div class="b" style="left:751px;top:178px;width:1px;height:21px;background:#e6e3da"></div>
<div class="b" style="left:867px;top:178px;width:1px;height:597px;background:#cfd3d8"></div>
<div class="b" style="left:867px;top:178px;width:1px;height:21px;background:#e6e3da"></div>
<div class="b" style="left:6px;top:152px;width:1px;height:623px;background:#a2a8b0"></div>
<div class="b" style="left:1205px;top:73px;width:3px;height:702px;background:#5b87b4"></div>
<div class="b" style="left:0px;top:773px;width:1208px;height:2px;background:#5b87b4"></div>
<div class="b" style="left:0px;top:40px;width:3px;height:735px;background:#5b87b4"></div>
<span class="t" style="left:305.90px;top:54px;font-size:11.5px;color:#fff;font-weight:normal;font-style:normal;transform:scaleX(1.1317);">Consultar</span>
<svg class="b" style="left:366.50px;top:55.00px;" width="8.6" height="4.6"><use href="#arw"/></svg>
<span class="t" style="left:384.15px;top:54px;font-size:11.5px;color:#fff;font-weight:normal;font-style:normal;transform:scaleX(1.2019);">Imprimir/exportar</span>
<svg class="b" style="left:493.80px;top:55.00px;" width="8.6" height="4.6"><use href="#arw"/></svg>
<svg class="b" style="left:507.00px;top:52.00px;" width="15.6" height="15.6"><use href="#qb"/></svg>
<svg class="b" style="left:532.70px;top:55.00px;" width="8.6" height="4.6"><use href="#arw"/></svg>
<div class="b" style="left:243px;top:68px;width:298px;height:169px;background:#283c56;box-shadow:1px 1px 2px rgba(0,0,0,.35)"></div>
<div class="b" style="left:240px;top:46px;width:63px;height:25px;background:#283c56;border:3px solid #fc0000;box-sizing:border-box;border-radius:2px"></div>
<span class="t" style="left:248.80px;top:54px;font-size:11.5px;color:#fff;font-weight:normal;font-style:normal;transform:scaleX(1.0917);">Ações</span>
<svg class="b" style="left:288.75px;top:55.00px;" width="8.6" height="4.6"><use href="#arw"/></svg>
<span class="t" style="left:247.90px;top:73px;font-size:11.5px;color:#fff;font-weight:normal;font-style:normal;transform:scaleX(1.1217);">Duplicar o registro selecionado</span>
<span class="t" style="left:247.90px;top:96px;font-size:11.5px;color:#fff;font-weight:normal;font-style:normal;transform:scaleX(1.1216);">Emitir e aprovar pedidos de compra selecionados</span>
<span class="t" style="left:247.90px;top:115px;font-size:11.5px;color:#fff;font-weight:normal;font-style:normal;transform:scaleX(1.1047);">Receber pedidos de compra selecionados</span>
<span class="t" style="left:247.90px;top:138px;font-size:11.5px;color:#fff;font-weight:normal;font-style:normal;transform:scaleX(1.1114);">Concluir pedidos de compra selecionados</span>
<span class="t" style="left:247.90px;top:157px;font-size:11.5px;color:#fff;font-weight:normal;font-style:normal;transform:scaleX(1.1084);">Desconcluir pedidos de compra selecionados</span>
<span class="t" style="left:247.90px;top:180px;font-size:11.5px;color:#fff;font-weight:normal;font-style:normal;transform:scaleX(1.1097);">Cancelar pedidos de compra selecionados</span>
<span class="t" style="left:247.90px;top:199px;font-size:11.5px;color:#fff;font-weight:normal;font-style:normal;transform:scaleX(1.1106);">Excluir pedidos de compra selecionados</span>
<div class="b" style="left:243px;top:88px;width:298px;height:1px;background:#b9c3ce"></div>
<div class="b" style="left:243px;top:130px;width:298px;height:1px;background:#b9c3ce"></div>
<div class="b" style="left:243px;top:172px;width:298px;height:1px;background:#b9c3ce"></div>
<div class="b" style="left:240px;top:215px;width:303px;height:24px;background:#213248;border:3px solid #fc0000;box-sizing:border-box;border-radius:2px"></div>
<span class="t" style="left:247.90px;top:222px;font-size:11.5px;color:#fff;font-weight:normal;font-style:normal;transform:scaleX(1.1338);">Importar pedidos de compra de arquivo Excel</span>
<div class="b" style="left:286px;top:239px;width:210px;height:1px;background:#8b8d90"></div>
</body></html>
